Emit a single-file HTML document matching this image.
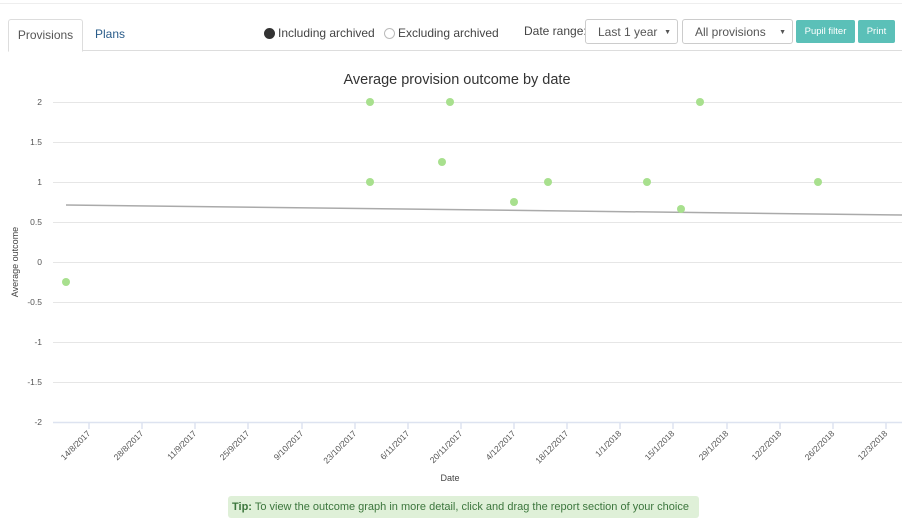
<!DOCTYPE html>
<html><head><meta charset="utf-8"><style>
body{margin:0;width:902px;height:528px;background:#fff;font-family:"Liberation Sans",sans-serif;position:relative;overflow:hidden;color:#333}
.topline{position:absolute;left:0;right:0;top:3px;border-top:1px solid #eee}
.tabline{position:absolute;left:8px;right:0;top:50px;border-top:1px solid #ddd}
.tab{position:absolute;top:19px;height:31px;font-size:12px;line-height:31px}
.t1{left:8px;width:73px;border:1px solid #ddd;border-bottom:1px solid #fff;border-radius:3px 3px 0 0;background:#fff;text-align:center;color:#555;z-index:2;height:31px}
.t2{left:95px;color:#2a5c8a}
.radio{position:absolute;top:26px;font-size:12px;color:#444;white-space:nowrap}
.radio i{display:inline-block;width:11px;height:11px;border-radius:50%;border:1px solid #bbb;vertical-align:-2px;margin-right:3px;box-sizing:border-box}
.sel{position:absolute;top:19px;height:25px;border:1px solid #ccc;border-radius:3px;font-size:12px;line-height:25px;padding-left:12px;box-sizing:border-box;color:#555}
.sel:after{content:"▼";position:absolute;right:6px;font-size:7px;top:0}
.btn{position:absolute;top:20px;height:23px;background:#5bc0b8;color:#fff;font-size:9.5px;line-height:23px;text-align:center;border-radius:2px}
.tip{position:absolute;left:228px;top:496px;width:471px;height:22px;background:#dff0d8;border-radius:3px;font-size:11px;line-height:22px;color:#3c763d;padding-left:4px;box-sizing:border-box;white-space:nowrap;overflow:hidden}
</style></head><body>
<div class="topline"></div>
<div class="tabline"></div>
<div class="tab t1">Provisions</div>
<div class="tab t2">Plans</div>
<div class="radio" style="left:264px"><i style="background:#333;border-color:#333"></i>Including archived</div>
<div class="radio" style="left:384px"><i></i>Excluding archived</div>
<div style="position:absolute;left:524px;top:24px;font-size:12px;color:#444">Date range:</div>
<div class="sel" style="left:585px;width:93px">Last 1 year</div>
<div class="sel" style="left:682px;width:111px">All provisions</div>
<div class="btn" style="left:796px;width:59px">Pupil filter</div>
<div class="btn" style="left:858px;width:37px">Print</div>
<svg width="902" height="528" style="position:absolute;left:0;top:0" font-family="Liberation Sans,sans-serif">
<text x="457" y="84" font-size="14.5" fill="#333" text-anchor="middle">Average provision outcome by date</text>
<g stroke="#e6e6e6" stroke-width="1">
<line x1="53" x2="902" y1="102.5" y2="102.5"/><line x1="53" x2="902" y1="142.5" y2="142.5"/><line x1="53" x2="902" y1="182.5" y2="182.5"/><line x1="53" x2="902" y1="222.5" y2="222.5"/><line x1="53" x2="902" y1="262.5" y2="262.5"/><line x1="53" x2="902" y1="302.5" y2="302.5"/><line x1="53" x2="902" y1="342.5" y2="342.5"/><line x1="53" x2="902" y1="382.5" y2="382.5"/></g>
<line x1="53" x2="902" y1="422.5" y2="422.5" stroke="#dde3f0" stroke-width="1.5"/>
<g font-size="8.5" fill="#555" text-anchor="end">
<text x="42" y="105">2</text><text x="42" y="145">1.5</text><text x="42" y="185">1</text><text x="42" y="225">0.5</text><text x="42" y="265">0</text><text x="42" y="305">-0.5</text><text x="42" y="345">-1</text><text x="42" y="385">-1.5</text><text x="42" y="425">-2</text></g>
<text transform="translate(18,262) rotate(-90)" font-size="9" fill="#444" text-anchor="middle">Average outcome</text>
<text x="450" y="481" font-size="9" fill="#444" text-anchor="middle">Date</text>
<g stroke="#dde3f0" stroke-width="1.5">
<line x1="89" x2="89" y1="422" y2="429"/><line x1="142" x2="142" y1="422" y2="429"/><line x1="195" x2="195" y1="422" y2="429"/><line x1="248" x2="248" y1="422" y2="429"/><line x1="302" x2="302" y1="422" y2="429"/><line x1="355" x2="355" y1="422" y2="429"/><line x1="408" x2="408" y1="422" y2="429"/><line x1="461" x2="461" y1="422" y2="429"/><line x1="514" x2="514" y1="422" y2="429"/><line x1="567" x2="567" y1="422" y2="429"/><line x1="620" x2="620" y1="422" y2="429"/><line x1="673" x2="673" y1="422" y2="429"/><line x1="727" x2="727" y1="422" y2="429"/><line x1="780" x2="780" y1="422" y2="429"/><line x1="833" x2="833" y1="422" y2="429"/><line x1="886" x2="886" y1="422" y2="429"/></g>
<g font-size="8.5" fill="#555" text-anchor="end">
<text transform="translate(91,434) rotate(-45)">14/8/2017</text>
<text transform="translate(144,434) rotate(-45)">28/8/2017</text>
<text transform="translate(197,434) rotate(-45)">11/9/2017</text>
<text transform="translate(250,434) rotate(-45)">25/9/2017</text>
<text transform="translate(304,434) rotate(-45)">9/10/2017</text>
<text transform="translate(357,434) rotate(-45)">23/10/2017</text>
<text transform="translate(410,434) rotate(-45)">6/11/2017</text>
<text transform="translate(463,434) rotate(-45)">20/11/2017</text>
<text transform="translate(516,434) rotate(-45)">4/12/2017</text>
<text transform="translate(569,434) rotate(-45)">18/12/2017</text>
<text transform="translate(622,434) rotate(-45)">1/1/2018</text>
<text transform="translate(675,434) rotate(-45)">15/1/2018</text>
<text transform="translate(729,434) rotate(-45)">29/1/2018</text>
<text transform="translate(782,434) rotate(-45)">12/2/2018</text>
<text transform="translate(835,434) rotate(-45)">26/2/2018</text>
<text transform="translate(888,434) rotate(-45)">12/3/2018</text></g>
<line x1="66" y1="205" x2="902" y2="215" stroke="#aaa" stroke-width="1.5"/>
<g fill="#a8e08e">
<circle cx="66" cy="282" r="4"/><circle cx="370" cy="102" r="4"/><circle cx="370" cy="182" r="4"/><circle cx="450" cy="102" r="4"/><circle cx="442" cy="162" r="4"/><circle cx="514" cy="202" r="4"/><circle cx="548" cy="182" r="4"/><circle cx="647" cy="182" r="4"/><circle cx="681" cy="209" r="4"/><circle cx="700" cy="102" r="4"/><circle cx="818" cy="182" r="4"/></g>
</svg>
<div class="tip"><b>Tip:</b> To view the outcome graph in more detail, click and drag the report section of your choice</div>
</body></html>
